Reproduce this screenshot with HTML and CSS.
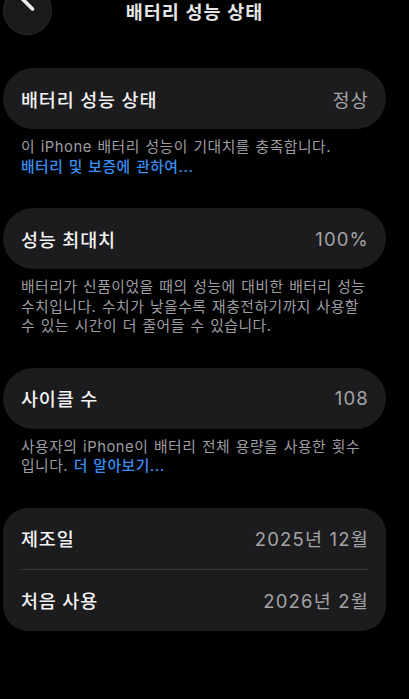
FILE: index.html
```html
<!DOCTYPE html>
<html lang="ko">
<head>
    <meta charset="UTF-8">
    <title>배터리 성능 상태</title>
    <link rel="stylesheet" href="styles.css">
</head>
<body>
    <div class="page">
        <header class="topbar">
            <button class="back" aria-label="뒤로">
                <svg width="49" height="49" viewBox="0 0 49 49">
                    <path d="M29.5 -1 L17.5 11 L29.5 23" fill="none" stroke="#ececec" stroke-width="3.6" stroke-linecap="round" stroke-linejoin="round"/>
                </svg>
            </button>
            <h1>배터리 성능 상태</h1>
            <span></span>
        </header>

        <div class="card">
            <span class="label">배터리 성능 상태</span>
            <span class="value">정상</span>
        </div>
        <p class="note">이 iPhone 배터리 성능이 기대치를 충족합니다.<br><a href="#">배터리 및 보증에 관하여...</a></p>

        <div class="card">
            <span class="label">성능 최대치</span>
            <span class="value">100%</span>
        </div>
        <p class="note">배터리가 신품이었을 때의 성능에 대비한 배터리 성능 수치입니다. 수치가 낮을수록 재충전하기까지 사용할 수 있는 시간이 더 줄어들 수 있습니다.</p>

        <div class="card">
            <span class="label">사이클 수</span>
            <span class="value">108</span>
        </div>
        <p class="note">사용자의 iPhone이 배터리 전체 용량을 사용한 횟수 입니다. <a href="#">더 알아보기...</a></p>

        <div class="group">
            <div class="row">
                <span class="label">제조일</span>
                <span class="value">2025년 12월</span>
            </div>
            <div class="row">
                <span class="label">처음 사용</span>
                <span class="value">2026년 2월</span>
            </div>
        </div>
    </div>
</body>
</html>
```

FILE: styles.css
```css
:root {
    --fundo: #000000;
    --cartao: #1c1c1e;
    --texto: #f2f2f4;
    --cinza: #a3a3a7;
    --nota: #9d9da1;
    --azul: #3a8ef2;
    --linha: #38383a;
}

body {
    margin: 0;
    background-color: var(--fundo);
    color: var(--texto);
    font-family: "Inter", "Noto Sans CJK KR", sans-serif;
}

.page {
    padding: 0 23px 0 3px;
}

.topbar {
    display: grid;
    grid-template-columns: 49px 1fr 49px;
    align-items: start;
    height: 36px;
    margin-bottom: 32px;
}

.back {
    width: 49px;
    height: 49px;
    margin-top: -14px;
    padding: 0;
    border: 1px solid #2c2c2e;
    border-radius: 50%;
    background-color: #1a1a1c;
    overflow: hidden;
}

.back svg {
    display: block;
    margin: -1px;
}

.topbar h1 {
    margin: 0;
    font-size: 18.5px;
    line-height: 24px;
    font-weight: 600;
    letter-spacing: 1px;
    text-align: center;
    color: #e4e4e6;
}

.card {
    display: flex;
    justify-content: space-between;
    align-items: center;
    height: 61px;
    padding: 0 18px;
    border-radius: 31px;
    background-color: var(--cartao);
}

.label {
    font-size: 18.5px;
    font-weight: 500;
    letter-spacing: 0.8px;
}

.value {
    font-size: 18.5px;
    letter-spacing: 1.2px;
    margin-right: -1px;
    color: var(--cinza);
}

.note {
    margin: 9px 0 31px;
    padding: 0 14px 0 18px;
    font-size: 14.8px;
    line-height: 19.5px;
    letter-spacing: 0.5px;
    word-spacing: 1px;
    color: var(--nota);
    word-break: keep-all;
}

.note a {
    color: var(--azul);
    text-decoration: none;
    font-weight: 500;
}

.group {
    border-radius: 25px;
    background-color: var(--cartao);
}

.row {
    display: flex;
    justify-content: space-between;
    align-items: center;
    height: 61px;
    margin: 0 18px;
}

.row + .row {
    border-top: 1px solid var(--linha);
}
```
